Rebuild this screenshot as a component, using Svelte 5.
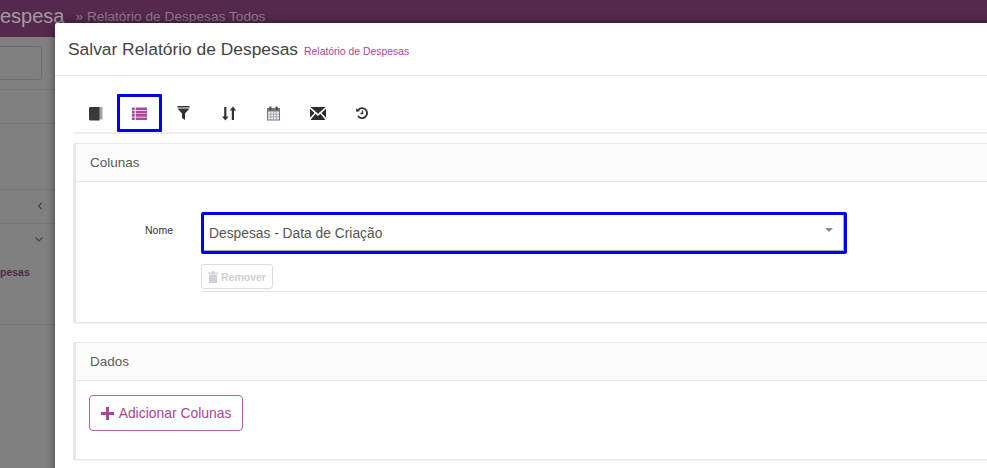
<script>
	const tabs = ['book', 'list', 'filter', 'sort', 'calendar', 'mail', 'history'];
	const sideRows = [
		{ h: 34, chev: '' },
		{ h: 66, chev: '' },
		{ h: 34, chev: 'left' },
		{ h: 101, chev: 'down', label: 'pesas' }
	];
</script>

<div class="page">
	<header class="topbar">
		<span class="brand">espesa</span>
		<span class="crumb">» Relatório de Despesas Todos</span>
	</header>
	<aside class="side">
		<div class="search-wrap"><div class="search"></div></div>
		{#each sideRows as row}
			<div class="side-row" style="height: {row.h}px">
				{#if row.chev === 'left'}
					<svg class="chev" width="8" height="10" viewBox="0 0 8 10"><path d="M5.5 2 2.5 5l3 3" fill="none" stroke="#444" stroke-width="1.2" /></svg>
				{:else if row.chev === 'down'}
					<svg class="chev" width="10" height="8" viewBox="0 0 10 8"><path d="M1.500 2.500 5 6l3.500-3.500" fill="none" stroke="#444" stroke-width="1.2" /></svg>
				{/if}
				{#if row.label}<span class="side-label">{row.label}</span>{/if}
			</div>
		{/each}
	</aside>

	<div class="modal">
		<div class="modal-head">
			<h4>Salvar Relatório de Despesas</h4>
			<small>Relatório de Despesas</small>
		</div>
		<div class="modal-body">
			<nav class="tabs">
				{#each tabs as t}
					<button class="tab" class:active={t === 'list'} aria-label={t}>
						{#if t === 'book'}
							<svg width="15" height="15" viewBox="0 0 15 15"><path d="M4 1h10.500v12.500H4z" fill="#a5a5a5" /><path d="M1 2.400C1 1.600 1.600 1 2.400 1H11.500v13.500H2.400c-.8 0-1.400-.6-1.400-1.400z" fill="#3b3836" /></svg>
						{:else if t === 'list'}
							<svg width="15" height="13" viewBox="0 0 15 13" fill="#a8479a"><path d="M0 .5h2.700v2.600H0zM3.700.5H15v2.600H3.700zM0 3.800h2.700v2.600H0zM3.700 3.800H15v2.600H3.700zM0 7.100h2.700v2.600H0zM3.700 7.100H15v2.600H3.700zM0 10.400h2.700V13H0zM3.700 10.400H15V13H3.700z" /></svg>
						{:else if t === 'filter'}
							<svg width="13" height="14" viewBox="0 0 13 14" fill="#333"><path d="M.5 0h12v1.500H.5zM.5 2.400h12L8 7.500V14L5 12V7.500z" /></svg>
						{:else if t === 'sort'}
							<svg width="15" height="15" viewBox="0 0 15 15" fill="#333"><path d="M3.200 1h2.200v9.500h2.100L4.300 14.500 1 10.500h2.200zM10.800 14V4.500H8.700L12 .5l3.200 4h-2.200V14z" /></svg>
						{:else if t === 'calendar'}
							<svg width="15" height="15" viewBox="0 0 15 15"><rect x="1" y="2" width="13" height="12.500" fill="#7d727d" /><rect x="3.200" y=".6" width="2.200" height="3.200" fill="#4a4a4a" /><rect x="9.600" y=".6" width="2.200" height="3.200" fill="#4a4a4a" /><path d="M2 5.500h11v8H2z" fill="#ece9f0" /><path d="M4.700 5.500v8M7.500 5.500v8M10.300 5.500v8M2 8.200h11M2 10.800h11" stroke="#a49eac" stroke-width=".8" /></svg>
						{:else if t === 'mail'}
							<svg width="16" height="13" viewBox="0 0 16 13" fill="#2c2c2c"><path d="M.3 0h15.400L8 6.800zM0 1.800l4.600 4.100L0 10.800zM16 1.800l-4.600 4.100 4.600 4.900zM5.500 6.700 8 8.900l2.500-2.200 5 6.300H.5z" /></svg>
						{:else}
							<svg width="14" height="14" viewBox="0 0 14 14" fill="none" stroke="#333" stroke-width="1.900"><path d="M3 4.200A5 5 0 1 1 3 10" /><path d="M1 2.200 1.400 6l3.600-.9" fill="#333" stroke="none" /><path d="M7.500 4.500V7.500H5.500" stroke-width="1.400" /></svg>
						{/if}
					</button>
				{/each}
			</nav>

			<section class="panel first">
				<div class="panel-head">Colunas</div>
				<div class="panel-body columns">
					<div class="field">
						<span class="field-label">Nome</span>
						<div class="field-main">
							<div class="select">
								<span>Despesas - Data de Criação</span>
								<i class="caret"></i>
							</div>
							<div class="remove-row">
								<button class="remove" disabled>
									<svg width="10" height="12" viewBox="0 0 10 12" fill="#cfcfd6"><path d="M0 1.600h10v1.200H0zM3.500.3h3V1.500h-3zM1 3.400h8V12H1z" /></svg>
									Remover
								</button>
							</div>
						</div>
					</div>
				</div>
			</section>

			<section class="panel second">
				<div class="panel-head">Dados</div>
				<div class="panel-body data">
					<button class="add">
						<svg width="13" height="13" viewBox="0 0 13 13" fill="#a8479a"><path d="M5 0h3v5h5v3H8v5H5V8H0V5h5z" /></svg>
						Adicionar Colunas
					</button>
				</div>
			</section>
		</div>
	</div>
</div>

<style>
	:global(body) {
		margin: 0;
		overflow: hidden;
	}

	.page {
		position: relative;
		width: 987px;
		height: 468px;
		overflow: hidden;
		background: #808080;
		font-family: "Liberation Sans", Arial, sans-serif;
	}

	.topbar {
		height: 37px;
		background: #55284d;
		display: flex;
		align-items: flex-start;
		padding-top: 5px;
		box-sizing: border-box;
		white-space: nowrap;
	}

	.brand {
		font-size: 20px;
		color: #a49aa3;
		line-height: 22px;
	}

	.crumb {
		font-size: 13.700px;
		color: #8c7a89;
		margin-left: 11px;
		line-height: 24px;
	}

	.side {
		width: 55px;
	}

	.search-wrap {
		height: 53px;
		border-bottom: 1px solid #767676;
		box-sizing: border-box;
		padding-top: 9px;
	}

	.search {
		width: 42px;
		height: 34px;
		box-sizing: border-box;
		border: 1px solid #6e6e6e;
		border-left: 0;
		border-radius: 0 4px 4px 0;
	}

	.side-row {
		position: relative;
		box-sizing: border-box;
		border-bottom: 1px solid #767676;
	}

	.chev {
		position: absolute;
		right: 11px;
		top: 11px;
	}

	.side-label {
		position: absolute;
		left: 0;
		top: 42px;
		font-size: 10.500px;
		font-weight: 700;
		color: #4f2b49;
	}

	.modal {
		position: absolute;
		left: 55px;
		top: 23px;
		width: 960px;
		height: 500px;
		background: #fff;
		box-shadow: 0 0 8px rgba(0, 0, 0, 0.5);
		border-radius: 2px 0 0 0;
	}

	.modal-head {
		height: 53px;
		box-sizing: border-box;
		border-bottom: 1px solid #e5e5e5;
		padding: 16px 13px 0;
		display: flex;
		align-items: baseline;
		gap: 6px;
		white-space: nowrap;
	}

	h4 {
		margin: 0;
		font-size: 17.400px;
		font-weight: 400;
		line-height: 20px;
		color: #444;
	}

	small {
		font-size: 10.400px;
		color: #a8479a;
	}

	.modal-body {
		padding: 18px 0 0 18px;
	}

	.tabs {
		display: flex;
		height: 38px;
		padding-left: 0;
		border-bottom: 2px solid #eeeeee;
	}

	.tab {
		width: 44.600px;
		height: 38px;
		box-sizing: border-box;
		margin: 0;
		padding: 0;
		border: 3px solid transparent;
		background: none;
		display: flex;
		align-items: center;
		justify-content: center;
	}

	.tab:first-child {
		width: 44px;
	}

	.tab.active {
		border-color: #0000f0;
		border-radius: 1px;
	}

	.panel {
		border: 1px solid #e7e7e7;
		border-left-width: 3px;
		border-radius: 2px;
		box-shadow: 0 1px 1px rgba(0, 0, 0, 0.05);
		width: 940px;
		box-sizing: border-box;
	}

	.panel.first {
		margin-top: 9px;
	}

	.panel.second {
		margin-top: 19px;
	}

	.panel-head {
		height: 38px;
		box-sizing: border-box;
		background: #fcfcfc;
		border-bottom: 1px solid #e7e7e7;
		padding: 0 14px;
		font-size: 13.500px;
		line-height: 37px;
		color: #5a5a5a;
	}

	.columns {
		height: 140px;
		box-sizing: border-box;
		padding-top: 30px;
	}

	.field {
		display: flex;
	}

	.field-label {
		width: 125px;
		box-sizing: border-box;
		padding: 12px 28px 0 0;
		text-align: right;
		font-size: 10.500px;
		color: #333;
	}

	.field-main {
		flex: 1;
	}

	.select {
		width: 646px;
		height: 42px;
		box-sizing: border-box;
		border: 3px solid #0000f0;
		border-radius: 2px;
		display: flex;
		align-items: center;
		justify-content: space-between;
		padding: 0 11px 0 5px;
		font-size: 13.800px;
		color: #555;
		box-shadow: inset -1px -1px 0 #aaa;
	}

	.caret {
		width: 0;
		height: 0;
		border-left: 4px solid transparent;
		border-right: 4px solid transparent;
		border-top: 4px solid #888;
		margin-top: -6px;
	}

	.remove-row {
		margin-top: 10px;
		padding-bottom: 2px;
		border-bottom: 1px solid #e5e5e5;
		height: 25px;
	}

	.remove {
		height: 25px;
		width: 72px;
		padding: 0;
		background: #fff;
		border: 1px solid #ddd;
		border-radius: 3px;
		font: 700 10.500px "Liberation Sans", Arial, sans-serif;
		color: #cfcfd6;
		display: flex;
		align-items: center;
		justify-content: center;
		gap: 3px;
	}

	.data {
		height: 78px;
		box-sizing: border-box;
		padding: 14px 0 0 13px;
	}

	.add {
		width: 154px;
		height: 36px;
		padding: 0;
		background: #fff;
		border: 1px solid #b85fab;
		border-radius: 4px;
		font: 400 13.900px "Liberation Sans", Arial, sans-serif;
		color: #a8479a;
		display: flex;
		align-items: center;
		justify-content: center;
		gap: 5px;
	}
</style>
